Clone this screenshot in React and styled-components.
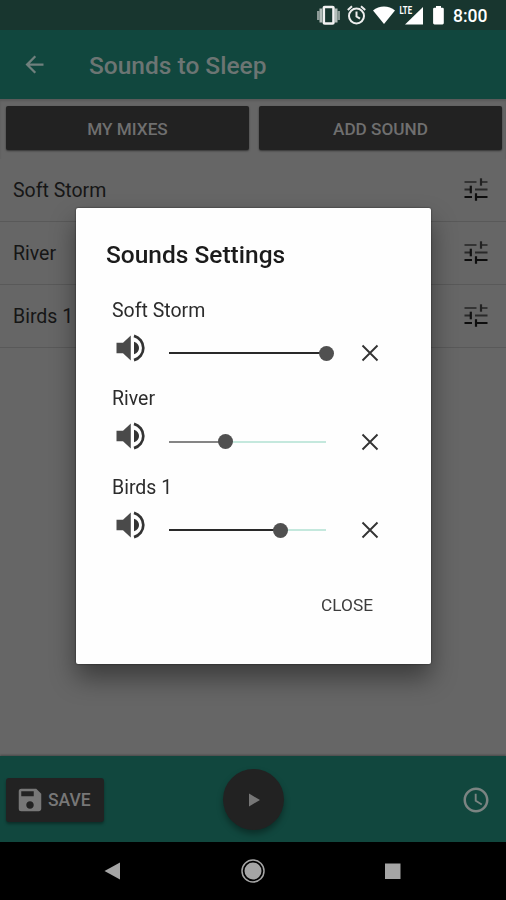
import React, { useState } from "react";
import { MdAccessTime, MdArrowBack, MdSave } from "react-icons/md";
import styled, { createGlobalStyle } from "styled-components";

const GlobalStyle = createGlobalStyle`
  * {
    box-sizing: border-box;
  }
  body {
    margin: 0;
    font-family: Roboto, "Liberation Sans", sans-serif;
  }
  button {
    font-family: inherit;
    border: none;
    padding: 0;
  }
  svg {
    display: block;
    flex: none;
  }
`;

const Screen = styled.div`
  width: 506px;
  height: 900px;
  display: flex;
  flex-direction: column;
  background-color: #666666;
  overflow: hidden;
`;

const StatusBar = styled.div`
  height: 30px;
  flex: none;
  display: flex;
  align-items: center;
  justify-content: flex-end;
  padding-right: 18px;
  background-color: #18362f;
  color: white;
`;

const StatusTime = styled.span`
  width: 35px;
  margin-left: 8.5px;
  font-size: 17.5px;
  font-weight: 500;
  line-height: 30px;
  padding-top: 2px;
`;

const Header = styled.header`
  height: 69px;
  flex: none;
  display: flex;
  align-items: center;
  padding: 0 0 0 21px;
  background-color: #11473e;
  color: #70807d;
`;

const Title = styled.h1`
  margin: 2px 0 0 41px;
  font-size: 24.5px;
  font-weight: 500;
  color: #6c7573;
`;

const Actions = styled.div`
  display: flex;
  gap: 10px;
  height: 60px;
  flex: none;
  padding: 7px 4px 9px 6px;
  box-shadow: inset 0 2px 2px rgba(0, 0, 0, 0.12);
`;

const ActionButton = styled.button`
  flex: 1;
  border-radius: 2px;
  background-color: #222222;
  color: #6f6f6f;
  font-size: 17.2px;
  font-weight: 500;
  padding-top: 2px;
  box-shadow: 0 1px 2px rgba(0, 0, 0, 0.5);
`;

const SoundList = styled.ul`
  flex: 1;
  margin: 0;
  padding: 0;
  list-style: none;
`;

const SoundItem = styled.li`
  height: 63px;
  display: flex;
  align-items: center;
  justify-content: space-between;
  padding: 0 18px 0 13px;
  border-bottom: 1px solid #595959;
  font-size: 19.5px;
  color: #161616;
`;

const PlayerBar = styled.div`
  height: 86px;
  flex: none;
  display: grid;
  grid-template-columns: 1fr auto 1fr;
  align-items: center;
  padding: 1px 15px 0 6px;
  background-color: #11473e;
  box-shadow: 0 -1px 2px rgba(0, 0, 0, 0.3);
  color: #7b8482;
`;

const SaveButton = styled.button`
  width: 98px;
  height: 44px;
  margin-top: 1px;
  display: flex;
  align-items: center;
  gap: 3px;
  padding-left: 9px;
  border-radius: 3px;
  background-color: #222222;
  color: #777777;
  font-size: 17.5px;
  font-weight: 500;
  box-shadow: 0 2px 3px rgba(0, 0, 0, 0.35);
`;

const PlayButton = styled.button`
  width: 61px;
  height: 61px;
  margin-left: 9px;
  display: flex;
  align-items: center;
  justify-content: center;
  padding-left: 2px;
  border-radius: 50%;
  background-color: #222222;
  box-shadow: 0 4px 6px rgba(0, 0, 0, 0.35);
`;

const TimerButton = styled.button`
  justify-self: end;
  background: none;
  color: #7b8482;
`;

const NavBar = styled.nav`
  height: 58px;
  flex: none;
  display: flex;
  justify-content: center;
  align-items: center;
  gap: 112px;
  background-color: #000000;
`;

const Overlay = styled.div`
  position: fixed;
  top: 0;
  left: 0;
  width: 506px;
  height: 871px;
  display: flex;
  align-items: center;
  justify-content: center;
`;

const Dialog = styled.div`
  width: 355px;
  height: 456px;
  margin-left: 1px;
  padding: 32px 36px 0;
  border-radius: 2px;
  background-color: #fefefe;
  box-shadow: 0 0 2px rgba(0, 0, 0, 0.7), 0 14px 26px rgba(0, 0, 0, 0.42);
`;

const DialogTitle = styled.h2`
  margin: 0 0 18px -6px;
  font-size: 24.5px;
  font-weight: 500;
  line-height: 30px;
  color: #1b1b1b;
`;

const Setting = styled.div`
  height: 88.5px;
`;

const SettingName = styled.div`
  padding-top: 11px;
  font-size: 19.5px;
  line-height: 24px;
  color: #2c2c2c;
`;

const SettingControls = styled.div`
  display: flex;
  align-items: center;
  height: 36px;
  margin-top: 7px;
  padding-left: 4px;
  color: #464646;
`;

const Slider = styled.div`
  width: 157px;
  height: 14px;
  margin: 11px 35px 0 24px;
  display: flex;
  align-items: center;
`;

const SliderFill = styled.div`
  height: 2px;
  background-color: ${(props) => props.$color};
`;

const SliderThumb = styled.div`
  width: 15px;
  height: 15px;
  flex: none;
  margin: 0 -7.5px;
  border-radius: 50%;
  background-color: #505050;
  z-index: 1;
`;

const SliderRest = styled.div`
  flex: 1;
  height: 2px;
  background-color: #c4e8dd;
`;

const RemoveButton = styled.button`
  margin-top: 11px;
  background: none;
`;

const CloseButton = styled.button`
  display: block;
  margin: 40px 22px 0 auto;
  background: none;
  color: #3c3c3c;
  font-size: 17.3px;
  line-height: 24px;
`;

const StatusIcons = () => (
  <svg width="129" height="30" viewBox="316 0 129 30" fill="#fff">
    {/* vibrate */}
    <path d="M317 11h2.500v9H317zM337.500 11h2.500v9h-2.500z" fill="#8d9a97" />
    <path d="M319.500 8.500h2.500v14h-2.500zM335 8.500h2.500v14H335z" fill="#b5bebb" />
    <rect x="323.800" y="7" width="9.700" height="16.500" rx="1" fill="none" stroke="#f2f2f2" strokeWidth="2.600" />
    {/* alarm */}
    <g fill="none" stroke="#eee" strokeWidth="2">
      <circle cx="356.500" cy="16" r="7.500" />
      <path d="M356.500 11.500v5l3.500 2.200M347.800 10l4.200-3.700M365.200 10l-4.200-3.700" />
    </g>
    {/* wifi */}
    <path d="M373 10.500C379 5 389 5 395 10.500L384 24z" />
    {/* signal */}
    <path d="M423 7v17.500h-18z" />
    <text x="399.500" y="14" fontSize="10.500" fontWeight="700" textLength="12.500" lengthAdjust="spacingAndGlyphs">LTE</text>
    {/* battery */}
    <path d="M436 6h5v1.800h1.500q1.300 0 1.300 1.300v14q0 1.400-1.300 1.400h-8q-1.400 0-1.400-1.400v-14q0-1.300 1.400-1.300h1.500z" />
  </svg>
);

const TuneIcon = () => (
  <svg width="24" height="24" viewBox="0 0.500 24 24" fill="none" strokeWidth="2.200">
    <path d="M0.500 4.500h12M17 4.500h6.500" stroke="#343434" />
    <path d="M17 0.800v7.400" stroke="#222" />
    <path d="M0.500 12h6M11 12h12.500" stroke="#292929" />
    <path d="M6.800 8.200v7.600" stroke="#111" />
    <path d="M0.500 19.500h7.500M12 19.500h11.500M12 15.800v7.500" stroke="#0d0d0d" />
  </svg>
);

const VolumeIcon = () => (
  <svg width="29" height="28" viewBox="0 0 29 28">
    <path d="M0.500 8.700h6.500L14.800 1.500v25L7 19.300H0.500z" fill="#4a4a4a" />
    <path d="M18 7.800Q23 9.500 23 14T18 20.200z" fill="#333" />
    <path d="M18 1.900C23.500 3.500 27.300 8.300 27.300 14S23.500 24.500 18 26.100" fill="none" stroke="#333" strokeWidth="2.700" />
  </svg>
);

const CrossIcon = () => (
  <svg width="18" height="18" viewBox="0 0 18 18">
    <path d="M1.500 1.500l15 15M16.500 1.500l-15 15" fill="none" stroke="#333" strokeWidth="1.900" />
  </svg>
);

const sounds = [
  { name: "Soft Storm", volume: 100, color: "#292929" },
  { name: "River", volume: 36, color: "#858585" },
  { name: "Birds 1", volume: 71, color: "#292929" },
];

const App = () => {
  const [open, setOpen] = useState(true);

  return (
    <Screen>
      <GlobalStyle />
      <StatusBar>
        <StatusIcons />
        <StatusTime>8:00</StatusTime>
      </StatusBar>
      <Header>
        <MdArrowBack size={27} />
        <Title>Sounds to Sleep</Title>
      </Header>
      <Actions>
        <ActionButton>MY MIXES</ActionButton>
        <ActionButton>ADD SOUND</ActionButton>
      </Actions>
      <SoundList>
        {sounds.map((sound) => (
          <SoundItem key={sound.name}>
            {sound.name}
            <TuneIcon />
          </SoundItem>
        ))}
      </SoundList>
      <PlayerBar>
        <SaveButton>
          <MdSave size={30} />
          SAVE
        </SaveButton>
        <PlayButton>
          <svg width="12" height="14" viewBox="0 0 12 14">
            <path d="M1 0.500v13L12 7z" fill="#777" />
          </svg>
        </PlayButton>
        <TimerButton>
          <MdAccessTime size={30} />
        </TimerButton>
      </PlayerBar>
      <NavBar>
        <svg width="28" height="28" viewBox="0 0 28 28">
          <path d="M21 5.500v17L5.500 14z" fill="#a5a5a5" />
        </svg>
        <svg width="28" height="28" viewBox="0 0 28 28">
          <circle cx="14" cy="14" r="11" fill="none" stroke="#a5a5a5" strokeWidth="1.500" />
          <circle cx="14" cy="14" r="8.500" fill="#a5a5a5" />
        </svg>
        <svg width="28" height="28" viewBox="0 0 28 28">
          <path d="M6 6.500h15.500V22H6z" fill="#a5a5a5" />
        </svg>
      </NavBar>
      {open && (
        <Overlay>
          <Dialog>
            <DialogTitle>Sounds Settings</DialogTitle>
            {sounds.map((sound) => (
              <Setting key={sound.name}>
                <SettingName>{sound.name}</SettingName>
                <SettingControls>
                  <VolumeIcon />
                  <Slider>
                    <SliderFill $color={sound.color} style={{ width: `${sound.volume}%` }} />
                    <SliderThumb />
                    <SliderRest />
                  </Slider>
                  <RemoveButton>
                    <CrossIcon />
                  </RemoveButton>
                </SettingControls>
              </Setting>
            ))}
            <CloseButton onClick={() => setOpen(false)}>CLOSE</CloseButton>
          </Dialog>
        </Overlay>
      )}
    </Screen>
  );
};

export default App;
